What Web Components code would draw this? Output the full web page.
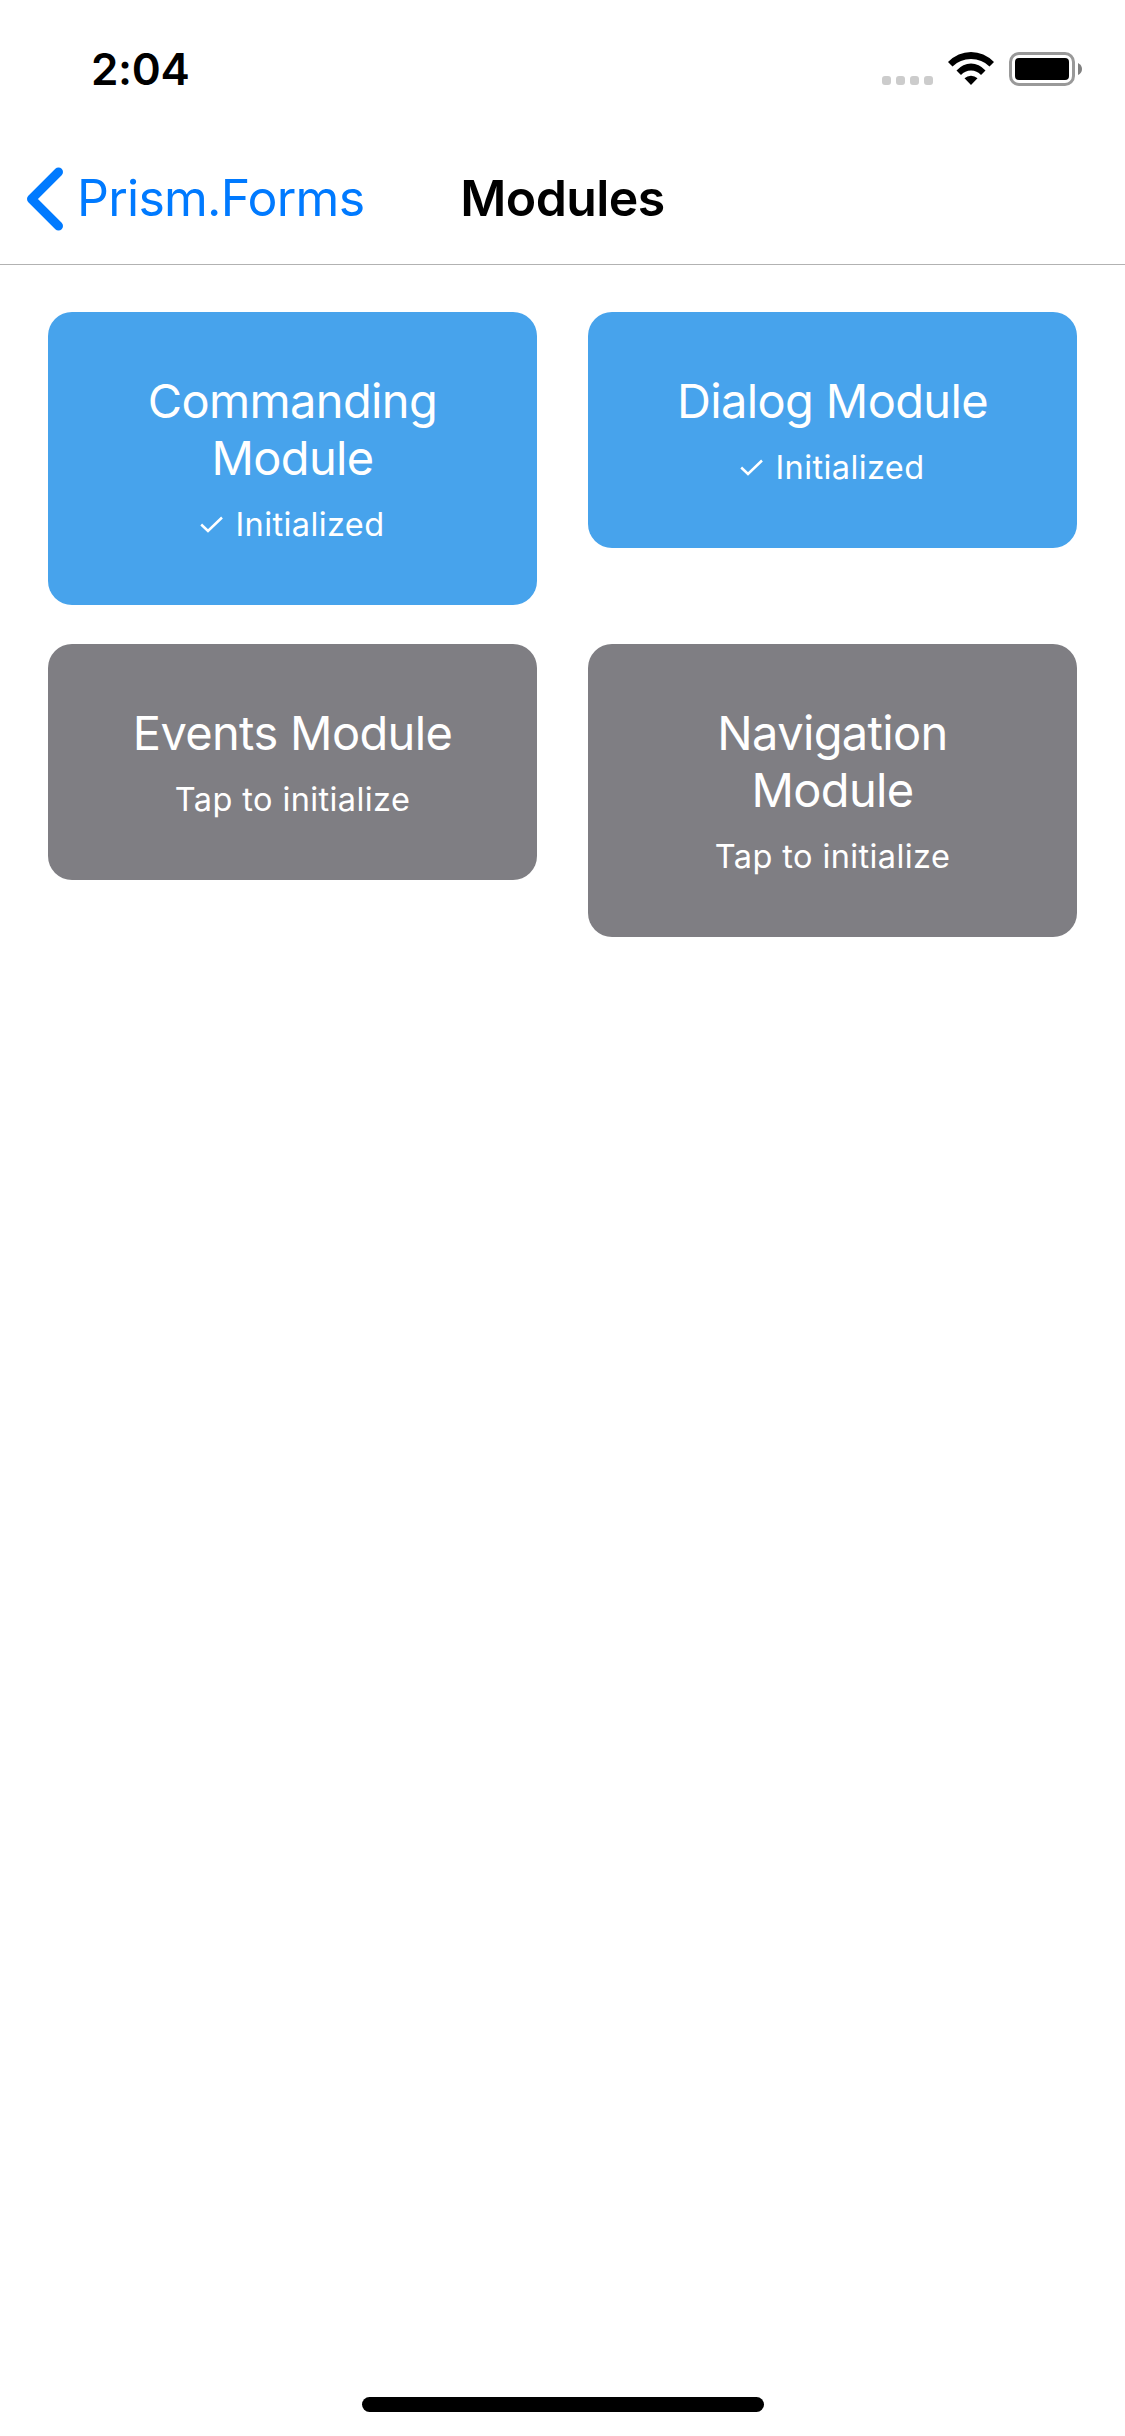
<!DOCTYPE html>
<html lang="en">
<head>
<meta charset="utf-8">
<title>Modules</title>
<style>
html,body{margin:0;padding:0;background:#fff}
body{font-family:Inter,"Liberation Sans",sans-serif}
</style>
</head>
<body>
<app-screen>
  <status-bar slot="top">2:04</status-bar>
  <nav-bar slot="top"><span slot="back">Prism.Forms</span>Modules</nav-bar>
  <module-card state="on">Commanding Module</module-card>
  <module-card state="on">Dialog Module</module-card>
  <module-card>Events Module</module-card>
  <module-card>Navigation Module</module-card>
</app-screen>
<script>
const define = (name, html, setup) => customElements.define(name, class extends HTMLElement {
  constructor() {
    super();
    this.attachShadow({ mode: 'open' }).innerHTML = html;
  }
  connectedCallback() { if (setup) setup(this); }
});

define('status-bar', `
<style>
:host{display:flex;height:132px;box-sizing:border-box;padding:42px 43px 0 91px;justify-content:space-between;align-items:flex-start}
.time{font-size:44px;line-height:54px;font-weight:600;letter-spacing:-.3px}
svg{display:block;margin-top:7px}
</style>
<div class="time"><slot></slot></div>
<svg width="201" height="40" viewBox="0 0 201 40">
  <g fill="#ccc"><rect x="1" y="27" width="9" height="9" rx="3"/><rect x="15" y="27" width="9" height="9" rx="3"/><rect x="29" y="27" width="9" height="9" rx="3"/><rect x="43" y="27" width="9" height="9" rx="3"/></g>
  <path d="M67 13 Q77 3 90 3 Q103 3 113 13 L108.500 17.500 Q101 10 90 10 Q79 10 71.500 17.500Z M75.500 21.500 Q82 14.500 90 14.500 Q98 14.500 104.500 21.500 L100 26 Q96 21.500 90 21.500 Q84 21.500 80 26Z M83.500 29.300 A9.500 9.500 0 0 1 96.500 29.300 L90 36Z"/>
  <rect x="129.500" y="4.500" width="63" height="31" rx="8.500" fill="none" stroke="#999" stroke-width="3"/>
  <rect x="134" y="9" width="54" height="22" rx="4"/>
  <path d="M197 14 Q201 16 201 20 Q201 24 197 26Z" fill="#808080"/>
</svg>`);

define('nav-bar', `
<style>
:host{display:grid;grid-template-columns:1fr auto 1fr;align-items:center;height:133px;box-sizing:border-box;border-bottom:1px solid #b2b2b2;padding:0 26px}
.back{display:flex;align-items:center;gap:13px;color:#007aff;font-size:50px;line-height:62px;letter-spacing:-.75px}
.title{font-size:50px;line-height:62px;font-weight:600;letter-spacing:-.6px}
svg{display:block;margin-top:1px}
</style>
<div class="back"><svg width="38" height="64" viewBox="0 0 38 64"><path d="M32.500 5 L5.500 32 L32.500 59" fill="none" stroke="#007aff" stroke-width="9" stroke-linecap="round" stroke-linejoin="round"/></svg><slot name="back"></slot></div>
<div class="title"><slot></slot></div>`);

define('module-card', `
<style>
:host{display:flex;flex-direction:column;align-items:center;box-sizing:border-box;padding:60px 60px 55px;border-radius:24px;background:#7f7e83;color:#fff;text-align:center}
:host([state=on]){background:#47a3ec}
.name{font-size:47px;line-height:57px;letter-spacing:-.65px}
.status{display:flex;align-items:center;justify-content:center;margin-top:14px;font-size:32.5px;line-height:50px;letter-spacing:.4px}
svg{display:none;margin-right:12px}
:host([state=on]) svg{display:block}
</style>
<div class="name"><slot></slot></div>
<div class="status"><svg width="23" height="18" viewBox="0 0 23 18"><path d="M1.200 8.500 L8 15 L22 1.500" fill="none" stroke="#fff" stroke-width="2.500"/></svg><span id="label"></span></div>`,
el => { el.shadowRoot.getElementById('label').textContent = el.getAttribute('state') === 'on' ? 'Initialized' : 'Tap to initialize'; });

define('app-screen', `
<style>
:host{display:flex;flex-direction:column;height:2436px;width:1125px;background:#fff;color:#000}
main{flex:1;display:grid;grid-template-columns:489px 489px;column-gap:51px;row-gap:39px;align-items:start;align-content:start;padding:47px 48px}
.home{width:402px;height:15px;border-radius:8px;background:#000;margin:0 auto 24px}
</style>
<slot name="top"></slot><main><slot></slot></main><div class="home"></div>`);
</script>
</body>
</html>
